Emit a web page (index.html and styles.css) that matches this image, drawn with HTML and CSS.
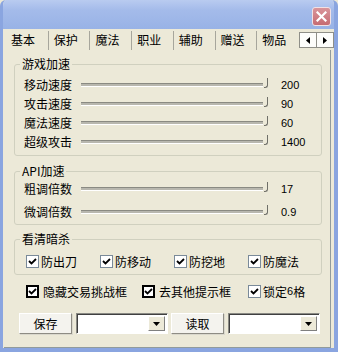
FILE: index.html
```html
<!DOCTYPE html>
<html>

<head>
    <meta content="text/html; charset=utf-8" http-equiv="Content-Type">
    <title>加速设置</title>
    <link rel="stylesheet" href="styles.css">
</head>

<body>
    <div class="window">
        <div class="titlebar">
            <div class="closeBtn">
                <svg width="11" height="11" viewBox="0 0 11 11"><path d="M1.5 1.5 L9.5 9.5 M9.5 1.5 L1.5 9.5" stroke="#fff" stroke-width="2.2" stroke-linecap="square"/></svg>
            </div>
        </div>
        <div class="tabbar">
            <div class="tab active">基本</div>
            <div class="tab">保护</div>
            <div class="tab">魔法</div>
            <div class="tab">职业</div>
            <div class="tab">辅助</div>
            <div class="tab">赠送</div>
            <div class="tab">物品</div>
            <div class="tabArrows">
                <span class="arrowBtn"><svg width="4" height="7" viewBox="0 0 4 7"><path d="M4 0 L0 3.5 L4 7 Z" fill="#000"/></svg></span>
                <span class="arrowBtn"><svg width="4" height="7" viewBox="0 0 4 7"><path d="M0 0 L4 3.5 L0 7 Z" fill="#000"/></svg></span>
            </div>
        </div>
        <div class="panel">
            <fieldset class="group groupSpeed">
                <legend>游戏加速</legend>
                <div class="sliderRow"><span class="sliderLabel">移动速度</span><span class="track"></span><span class="thumb"></span><span class="value">200</span></div>
                <div class="sliderRow"><span class="sliderLabel">攻击速度</span><span class="track"></span><span class="thumb"></span><span class="value">90</span></div>
                <div class="sliderRow"><span class="sliderLabel">魔法速度</span><span class="track"></span><span class="thumb"></span><span class="value">60</span></div>
                <div class="sliderRow"><span class="sliderLabel">超级攻击</span><span class="track"></span><span class="thumb"></span><span class="value">1400</span></div>
            </fieldset>
            <fieldset class="group groupApi">
                <legend>API加速</legend>
                <div class="sliderRow"><span class="sliderLabel">粗调倍数</span><span class="track"></span><span class="thumb"></span><span class="value">17</span></div>
                <div class="sliderRow"><span class="sliderLabel">微调倍数</span><span class="track"></span><span class="thumb"></span><span class="value">0.9</span></div>
            </fieldset>
            <fieldset class="group groupKill">
                <legend>看清暗杀</legend>
                <div class="checkRow killRow">
                    <label class="check col74"><span class="box"><svg width="9" height="9" viewBox="0 0 9 9"><path d="M1 4 L3.5 6.5 L8 2" stroke="#000" stroke-width="1.8" fill="none"/></svg></span>防出刀</label>
                    <label class="check col74"><span class="box"><svg width="9" height="9" viewBox="0 0 9 9"><path d="M1 4 L3.5 6.5 L8 2" stroke="#000" stroke-width="1.8" fill="none"/></svg></span>防移动</label>
                    <label class="check col74"><span class="box"><svg width="9" height="9" viewBox="0 0 9 9"><path d="M1 4 L3.5 6.5 L8 2" stroke="#000" stroke-width="1.8" fill="none"/></svg></span>防挖地</label>
                    <label class="check"><span class="box"><svg width="9" height="9" viewBox="0 0 9 9"><path d="M1 4 L3.5 6.5 L8 2" stroke="#000" stroke-width="1.8" fill="none"/></svg></span>防魔法</label>
                </div>
            </fieldset>
            <div class="checkRow optionsRow">
                <label class="check colHide"><span class="box bold"><svg width="9" height="9" viewBox="0 0 9 9"><path d="M1 4 L3.5 6.5 L8 2" stroke="#000" stroke-width="1.8" fill="none"/></svg></span>隐藏交易挑战框</label>
                <label class="check colOther"><span class="box bold"><svg width="9" height="9" viewBox="0 0 9 9"><path d="M1 4 L3.5 6.5 L8 2" stroke="#000" stroke-width="1.8" fill="none"/></svg></span>去其他提示框</label>
                <label class="check"><span class="box"><svg width="9" height="9" viewBox="0 0 9 9"><path d="M1 4 L3.5 6.5 L8 2" stroke="#000" stroke-width="1.8" fill="none"/></svg></span>锁定<span class="num">6</span>格</label>
            </div>
            <div class="buttonRow">
                <button class="btn">保存</button>
                <div class="combo"><span class="comboText"></span><span class="comboBtn"><svg width="7" height="4" viewBox="0 0 7 4"><path d="M0 0 L7 0 L3.5 4 Z" fill="#000"/></svg></span></div>
                <button class="btn">读取</button>
                <div class="combo"><span class="comboText"></span><span class="comboBtn"><svg width="7" height="4" viewBox="0 0 7 4"><path d="M0 0 L7 0 L3.5 4 Z" fill="#000"/></svg></span></div>
            </div>
        </div>
    </div>
</body>

</html>
```

FILE: styles.css
```css
html, body {
    margin: 0;
    padding: 0;
    background: #ece9d8;
}

body {
    font-family: "Noto Sans CJK SC", "Noto Sans", sans-serif;
    font-size: 12px;
    color: #000;
}

.window {
    width: 338px;
    height: 352px;
    box-sizing: border-box;
    display: flex;
    flex-direction: column;
    background: #ece9d8;
    border-left: 3px solid #8aa5e0;
    border-right: 4px solid #8aa5e0;
    border-bottom: 4px solid #8aa5e0;
    border-radius: 6px 6px 0 0;
    overflow: hidden;
}

.titlebar {
    height: 29px;
    flex: none;
    display: flex;
    justify-content: flex-end;
    align-items: flex-start;
    padding-top: 7px;
    padding-right: 3px;
    box-sizing: border-box;
    margin: 0 -4px 0 -3px;
    background: linear-gradient(#b9cbf0 0%, #a4bbea 35%, #98b2e6 100%);
}

.closeBtn {
    width: 19px;
    height: 19px;
    box-sizing: border-box;
    margin-right: 4px;
    display: flex;
    align-items: center;
    justify-content: center;
    border: 1px solid #f1e1e4;
    border-radius: 3px;
    background: linear-gradient(#d9959a, #c66b72);
}

.tabbar {
    height: 21px;
    flex: none;
    display: flex;
    align-items: flex-end;
    padding-left: 1px;
}

.tab {
    width: 42px;
    height: 19px;
    box-sizing: border-box;
    padding-left: 5px;
    line-height: 18px;
    border-left: 1px solid #a7a69c;
}

.tab.active {
    width: 44px;
    height: 21px;
    padding-left: 7px;
    line-height: 21px;
    border-left: none;
}

.tabArrows {
    display: flex;
    margin-left: 1px;
    margin-bottom: 2px;
    border: 1px solid #8f8f88;
    background: #fdfdfb;
}

.arrowBtn {
    width: 16px;
    height: 14px;
    display: flex;
    align-items: center;
    justify-content: center;
}

.arrowBtn + .arrowBtn {
    border-left: 1px solid #8f8f88;
}

.panel {
    flex: 1;
    margin-left: 1px;
    margin-right: 3px;
    border-right: 1px solid #919b9c;
    border-bottom: 1px solid #919b9c;
    padding-top: 6px;
}

.group {
    margin: 0 8px 0 10px;
    padding: 0;
    border: 1px solid #d0d0bf;
    border-radius: 3px;
    min-width: 0;
}

.group legend {
    padding: 0 2px;
    margin-left: 5px;
    line-height: 16px;
}

.groupSpeed {
    padding-top: 3px;
    padding-bottom: 4px;
}

.groupApi {
    margin-top: 7px;
    padding-bottom: 3px;
}

.groupApi .sliderRow + .sliderRow {
    margin-top: 4px;
}

.groupKill {
    margin-top: 6px;
    padding-top: 6px;
    padding-bottom: 5px;
}

.sliderRow {
    height: 19px;
    margin-left: 9px;
    display: flex;
    align-items: center;
}

.sliderLabel {
    width: 57px;
    flex: none;
}

.track {
    width: 182px;
    height: 2px;
    border-top: 1px solid #8a8a82;
    border-bottom: 1px solid #fff;
    background: #b8b7ae;
}

.thumb {
    width: 3px;
    height: 9px;
    margin-left: 1px;
    margin-top: -3px;
    border-right: 1px solid #6f6f68;
    border-bottom: 1px solid #6f6f68;
    border-radius: 0 0 3px 0;
}

.value {
    margin-left: 13px;
    font-family: "Liberation Sans", Arial, sans-serif;
    font-size: 11px;
}

.checkRow {
    height: 16px;
    display: flex;
    align-items: center;
}

.killRow {
    margin-left: 11px;
}

.check {
    display: flex;
    align-items: center;
}

.col74 {
    width: 74px;
}

.box {
    width: 13px;
    height: 13px;
    box-sizing: border-box;
    margin-right: 2px;
    display: flex;
    align-items: center;
    justify-content: center;
    border: 1px solid #7a8a99;
    background: #fff;
}

.box.bold {
    border: 2px solid #000;
    margin-right: 4px;
}

.num {
    font-family: "Liberation Sans", Arial, sans-serif;
    font-size: 11px;
}

.optionsRow {
    margin-top: 8px;
    padding-left: 22px;
}

.colHide {
    width: 116px;
}

.colOther {
    width: 106px;
}

.buttonRow {
    margin-top: 14px;
    padding-left: 15px;
    display: flex;
    align-items: center;
    gap: 3px;
}

.btn {
    width: 53px;
    height: 21px;
    margin: 0;
    padding: 0;
    font-family: inherit;
    font-size: 12px;
    background: #f4f3ee;
    border: 1px solid;
    border-color: #fff #8e8c84 #8e8c84 #fff;
    box-shadow: 1px 1px 0 #dad8cd;
}

.btn + .combo {
    margin-left: 1px;
}

.combo {
    width: 92px;
    height: 21px;
    box-sizing: border-box;
    display: flex;
    background: #fff;
    border: 1px solid;
    border-color: #8a8a84 #fff #fff #8a8a84;
    box-shadow: inset 1px 1px 0 #404040;
    padding: 2px 2px 2px 2px;
}

.comboText {
    flex: 1;
}

.comboBtn {
    width: 15px;
    display: flex;
    align-items: center;
    justify-content: center;
    background: #ece9d8;
    border: 1px solid;
    border-color: #fff #808080 #808080 #fff;
}
```
